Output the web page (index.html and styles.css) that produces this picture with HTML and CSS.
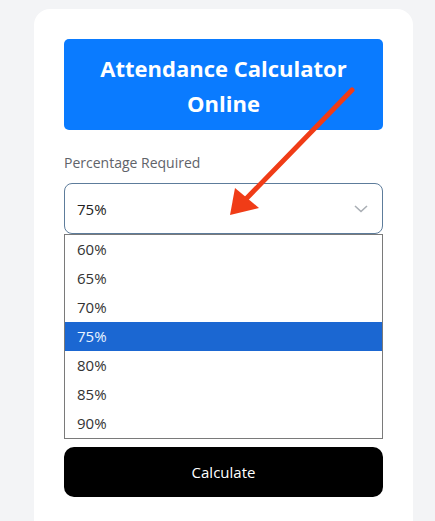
FILE: index.html
```html
<!DOCTYPE html>
<html lang="en">
<head>
<meta charset="UTF-8">
<title>Attendance Calculator Online</title>
<link rel="stylesheet" href="styles.css">
</head>
<body>
<div class="card">
	<h1 class="title">Attendance Calculator Online</h1>
	<label class="label">Percentage Required</label>
	<div class="select">
		<span>75%</span>
		<svg class="chev" width="14" height="8" viewBox="0 0 14 8"><path d="M1 1l6 5.5L13 1" fill="none" stroke="#a9aeb4" stroke-width="1.6"/></svg>
	</div>
	<ul class="options">
		<li>60%</li>
		<li>65%</li>
		<li>70%</li>
		<li class="active">75%</li>
		<li>80%</li>
		<li>85%</li>
		<li>90%</li>
	</ul>
	<a href="javascript:;" class="btn">Calculate</a>
	<svg class="arrow" width="435" height="521" viewBox="0 0 435 521">
		<line x1="352" y1="90" x2="244" y2="201" stroke="#f03c17" stroke-width="5" stroke-linecap="round"/>
		<polygon points="230,215 235,188 259,208" fill="#f03c17"/>
	</svg>
</div>
</body>
</html>
```

FILE: styles.css
```css
body {
	margin: 0;
	background: #f3f4f6;
	font-family: "Open Sans", "Noto Sans", sans-serif;
}
ul {
	margin: 0;
	padding: 0;
	list-style: none;
}
a {
	text-decoration: none;
}
.card {
	width: 319px;
	margin: 9px 0 0 34px;
	padding: 30px 30px 24px;
	background: #fff;
	border-radius: 16px 16px 0 0;
}
.title {
	margin: 0;
	padding: 12px 20px 9px;
	background: #0a7bff;
	border-radius: 5px;
	color: #fff;
	font-size: 22px;
	line-height: 35px;
	font-weight: 700;
	text-align: center;
}
.label {
	display: block;
	margin-top: 23px;
	color: #5f6369;
	font-size: 14px;
	line-height: 20px;
}
.select {
	display: flex;
	align-items: center;
	justify-content: space-between;
	box-sizing: border-box;
	height: 51px;
	margin-top: 10px;
	padding: 0 14px 0 12px;
	border: 1px solid #5d7c9b;
	border-radius: 8px;
	color: #222;
	font-size: 15px;
}
.options {
	border: 1px solid #7a7a7a;
	color: #333;
	font-size: 15px;
}
.options li {
	height: 29px;
	line-height: 29px;
	padding-left: 12px;
}
.options .active {
	background: #1b67d2;
	color: #eaf4ff;
}
.btn {
	display: block;
	margin-top: 8px;
	height: 50px;
	line-height: 50px;
	background: #000;
	border-radius: 10px;
	color: #fff;
	font-size: 15px;
	text-align: center;
}
.arrow {
	position: absolute;
	left: 0;
	top: 0;
	pointer-events: none;
}
```
